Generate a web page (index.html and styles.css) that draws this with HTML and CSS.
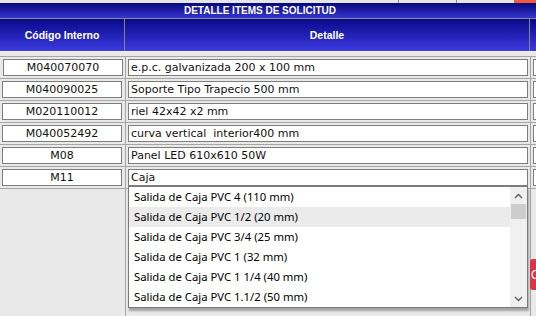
FILE: index.html
```html
<!DOCTYPE html>
<html lang="es">
<head>
    <meta charset="UTF-8">
    <meta name="viewport" content="width=device-width, initial-scale=1.0">
    <title>Detalle Items de Solicitud</title>
    <link rel="stylesheet" href="styles.css">
</head>
<body>
    <div class="top-strip">
        <span class="strip-cell strip-wide"></span>
        <span class="strip-cell strip-mid"></span>
        <span class="strip-cell strip-small"></span>
        <span class="strip-cell strip-danger"></span>
    </div>

    <div class="panel-title">DETALLE ITEMS DE SOLICITUD</div>

    <div class="items-head">
        <div class="th">Código Interno</div>
        <div class="th">Detalle</div>
        <div class="th"></div>
    </div>

    <div class="items">
        <div class="td"><input class="code" type="text" value="M040070070"></div>
        <div class="td"><input class="detail" type="text" value="e.p.c. galvanizada 200 x 100 mm"></div>
        <div class="td"><input class="extra" type="text"></div>

        <div class="td"><input class="code" type="text" value="M040090025"></div>
        <div class="td"><input class="detail" type="text" value="Soporte Tipo Trapecio 500 mm"></div>
        <div class="td"><input class="extra" type="text"></div>

        <div class="td"><input class="code" type="text" value="M020110012"></div>
        <div class="td"><input class="detail" type="text" value="riel 42x42 x2 mm"></div>
        <div class="td"><input class="extra" type="text"></div>

        <div class="td"><input class="code" type="text" value="M040052492"></div>
        <div class="td"><input class="detail" type="text" value="curva vertical  interior400 mm"></div>
        <div class="td"><input class="extra" type="text"></div>

        <div class="td"><input class="code" type="text" value="M08"></div>
        <div class="td"><input class="detail" type="text" value="Panel LED 610x610 50W"></div>
        <div class="td"><input class="extra" type="text"></div>

        <div class="td"><input class="code" type="text" value="M11"></div>
        <div class="td autocomplete">
            <input class="detail" type="text" value="Caja">
            <div class="suggest-list">
                <ul class="suggest-items">
                    <li>Salida de Caja PVC 4 (110 mm)</li>
                    <li class="hover">Salida de Caja PVC 1/2 (20 mm)</li>
                    <li>Salida de Caja PVC 3/4 (25 mm)</li>
                    <li>Salida de Caja PVC 1 (32 mm)</li>
                    <li>Salida de Caja PVC 1 1/4 (40 mm)</li>
                    <li>Salida de Caja PVC 1.1/2 (50 mm)</li>
                </ul>
                <div class="suggest-scroll">
                    <svg class="arrow" width="9" height="6" viewBox="0 0 9 6"><path d="M1 5 L4.5 1.5 L8 5" fill="none" stroke="#606060" stroke-width="1.4"/></svg>
                    <div class="thumb"></div>
                    <div class="track"></div>
                    <svg class="arrow" width="9" height="6" viewBox="0 0 9 6"><path d="M1 1 L4.5 4.5 L8 1" fill="none" stroke="#606060" stroke-width="1.4"/></svg>
                </div>
            </div>
        </div>
        <div class="td"><input class="extra" type="text"></div>

        <div class="td filler"></div>
        <div class="td filler"></div>
        <div class="td filler">
            <button class="btn-danger">O</button>
        </div>
    </div>
</body>
</html>
```

FILE: styles.css
```css
body {
    margin: 0;
    padding: 0;
    width: 536px;
    height: 316px;
    overflow: hidden;
    background: #e9e9e9;
    font-family: "DejaVu Sans", Verdana, sans-serif;
}

.top-strip {
    display: flex;
    height: 3px;
    background: #e6e6e6;
}

.strip-cell {
    display: block;
    height: 3px;
    border-right: 1px solid #8a8a8a;
}

.strip-wide { width: 398px; }
.strip-mid { width: 57px; }
.strip-small { width: 57px; border-right: none; }
.strip-danger { flex: 1; background: #f2593b; border-right: none; }

.panel-title {
    height: 15px;
    line-height: 15px;
    background: linear-gradient(#07077c, #3535cf);
    color: white;
    text-align: center;
    font-family: "Liberation Sans", Arial, sans-serif;
    font-size: 10px;
    font-weight: bold;
    padding-right: 16px;
}

.items-head {
    display: grid;
    grid-template-columns: 124px 404px 1fr;
    gap: 1px;
    background: #858585;
    border-top: 1px solid #8a8a8a;
    border-bottom: 1px solid #f4f4f4;
}

.th {
    height: 32px;
    line-height: 32px;
    background: linear-gradient(#08088a, #3b3be0);
    color: white;
    text-align: center;
    font-family: "Liberation Sans", Arial, sans-serif;
    font-size: 10.5px;
    font-weight: bold;
}

.items {
    display: grid;
    grid-template-columns: 125px 404px 1fr;
    gap: 1px;
    background: #a6a6a6;
    margin-top: 4px;
    border-top: 1px solid #a6a6a6;
}

.td {
    background: #e9e9e9;
    padding: 2px 2px 2px 3px;
}

.td + .td {
    padding-left: 2px;
}

.items input {
    display: block;
    box-sizing: border-box;
    height: 17px;
    margin: 0;
    padding: 0 2px;
    border: 1px solid #7d7d7d;
    background: #ffffff;
    font-family: "DejaVu Sans", Verdana, sans-serif;
    font-size: 11px;
    color: #111111;
    outline: none;
}

.code {
    width: 120px;
    text-align: center;
}

.detail {
    width: 400px;
    text-align: left;
}

.extra {
    width: 40px;
}

.filler {
    height: 130px;
    padding: 0;
}

.autocomplete {
    position: relative;
}

.suggest-list {
    position: absolute;
    top: 19px;
    left: 2px;
    z-index: 5;
    display: flex;
    width: 398px;
    height: 120px;
    border: 1px solid #7a7a7a;
    background: #ffffff;
    box-shadow: 1px 3px 2px rgba(0, 0, 0, 0.3);
}

.suggest-items {
    flex: 1;
    margin: 0;
    padding: 0;
    list-style: none;
}

.suggest-items li {
    height: 20px;
    line-height: 20px;
    padding-left: 5px;
    font-family: "Noto Sans", "Open Sans", sans-serif;
    font-size: 11.3px;
    color: #000000;
}

.suggest-items li.hover {
    background: #ebebeb;
}

.suggest-scroll {
    width: 17px;
    display: flex;
    flex-direction: column;
    align-items: center;
    background: #f0f0f0;
    padding: 6px 0 5px;
    box-sizing: border-box;
}

.thumb {
    width: 15px;
    height: 15px;
    margin-top: 5px;
    background: #cdcdcd;
}

.track {
    flex: 1;
}

.btn-danger {
    display: block;
    margin-top: 70px;
    margin-left: -3px;
    width: 8px;
    height: 31px;
    overflow: hidden;
    border: none;
    border-radius: 3px 0 0 3px;
    background: #dc3545;
    color: white;
    font-family: "Liberation Sans", Arial, sans-serif;
    font-size: 12px;
    text-align: left;
    padding: 0 0 0 1px;
}
```
